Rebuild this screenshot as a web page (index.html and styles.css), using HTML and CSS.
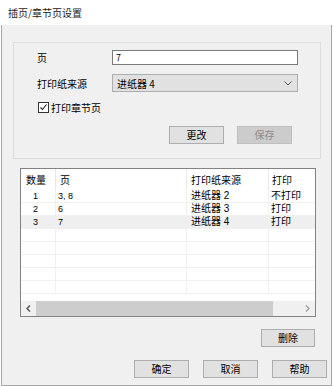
FILE: index.html
```html
<!DOCTYPE html>
<html lang="zh">
<head>
  <meta charset="UTF-8">
  <title>插页/章节页设置</title>
  <link rel="stylesheet" href="styles.css">
</head>
<body>
  <div class="titlebar">插页/章节页设置</div>
  <div class="dialog">
    <div class="group">
      <div class="field">
        <label class="field-label">页</label>
        <div class="textbox">7</div>
      </div>
      <div class="field field-source">
        <label class="field-label">打印纸来源</label>
        <div class="select">
          <span>进纸器 4</span>
          <svg class="chevron" width="8" height="5" viewBox="0 0 8 5"><path d="M0.5 0.5 L4 4 L7.5 0.5" fill="none" stroke="#555" stroke-width="1"/></svg>
        </div>
      </div>
      <div class="check">
        <span class="box">
          <svg width="9" height="9" viewBox="0 0 9 9"><path d="M1.5 4.5 L3.5 6.5 L7.5 1.5" fill="none" stroke="#222" stroke-width="1.1"/></svg>
        </span>
        打印章节页
      </div>
      <div class="group-actions">
        <button class="btn">更改</button>
        <button class="btn" disabled>保存</button>
      </div>
    </div>

    <div class="list">
      <div class="list-body">
        <div class="row header">
          <div class="cell c1">数量</div>
          <div class="cell c2">页</div>
          <div class="cell c3">打印纸来源</div>
          <div class="cell c4">打印</div>
        </div>
        <div class="row">
          <div class="cell c1">1</div>
          <div class="cell c2">3, 8</div>
          <div class="cell c3">进纸器 2</div>
          <div class="cell c4">不打印</div>
        </div>
        <div class="row">
          <div class="cell c1">2</div>
          <div class="cell c2">6</div>
          <div class="cell c3">进纸器 3</div>
          <div class="cell c4">打印</div>
        </div>
        <div class="row selected">
          <div class="cell c1">3</div>
          <div class="cell c2">7</div>
          <div class="cell c3">进纸器 4</div>
          <div class="cell c4">打印</div>
        </div>
        <div class="row"><div class="cell c1"></div><div class="cell c2"></div><div class="cell c3"></div><div class="cell c4"></div></div>
        <div class="row"><div class="cell c1"></div><div class="cell c2"></div><div class="cell c3"></div><div class="cell c4"></div></div>
        <div class="row"><div class="cell c1"></div><div class="cell c2"></div><div class="cell c3"></div><div class="cell c4"></div></div>
        <div class="row"><div class="cell c1"></div><div class="cell c2"></div><div class="cell c3"></div><div class="cell c4"></div></div>
        <div class="row"><div class="cell c1"></div><div class="cell c2"></div><div class="cell c3"></div><div class="cell c4"></div></div>
      </div>
      <div class="hscroll">
        <div class="arrow">
          <svg width="5" height="7" viewBox="0 0 5 7"><path d="M4 0.5 L1 3.5 L4 6.5" fill="none" stroke="#505050" stroke-width="1.4"/></svg>
        </div>
        <div class="thumb"></div>
        <div class="track"></div>
        <div class="arrow">
          <svg width="5" height="7" viewBox="0 0 5 7"><path d="M1 0.5 L4 3.5 L1 6.5" fill="none" stroke="#9a9a9a" stroke-width="1.2"/></svg>
        </div>
      </div>
    </div>

    <div class="delete-row">
      <button class="btn">删除</button>
    </div>

    <div class="footer">
      <button class="btn">确定</button>
      <button class="btn">取消</button>
      <button class="btn">帮助</button>
    </div>
  </div>
</body>
</html>
```

FILE: styles.css
```css
* {
  box-sizing: border-box;
}

body {
  margin: 0;
  width: 334px;
  height: 386px;
  background: #ffffff;
  font-family: "Noto Sans CJK SC", "Noto Sans", sans-serif;
  font-size: 10px;
  color: #000;
  overflow: hidden;
}

.titlebar {
  height: 25px;
  padding-left: 8px;
  line-height: 25px;
  background: #fff;
  color: #1a1a1a;
}

.dialog {
  width: 331px;
  height: 361px;
  margin-left: 1px;
  background: #f0f0f0;
  border: 1px solid #a7a7a7;
  border-top: none;
  overflow: hidden;
}

/* upper group box */
.group {
  width: 308px;
  height: 117px;
  margin: 17px 0 0 11px;
  padding: 7px 0 0 23px;
  border: 1px solid #dcdcdc;
}

.field {
  display: flex;
  align-items: center;
}

.field-source {
  margin-top: 9px;
}

.field-label {
  width: 75px;
  flex-shrink: 0;
}

.textbox {
  width: 186px;
  height: 15px;
  padding-left: 3px;
  line-height: 13px;
  background: #fff;
  border: 1px solid #7a7a7a;
  font-size: 9px;
}

.select {
  width: 186px;
  height: 18px;
  display: flex;
  align-items: center;
  justify-content: space-between;
  padding: 0 5px 0 4px;
  background: #e1e1e1;
  border: 1px solid #adadad;
}

.check {
  display: flex;
  align-items: center;
  gap: 2px;
  margin: 9px 0 0 1px;
  height: 12px;
}

.box {
  width: 11px;
  height: 11px;
  display: flex;
  align-items: center;
  justify-content: center;
  background: #fff;
  border: 1px solid #333;
}

.group-actions {
  display: flex;
  justify-content: flex-end;
  gap: 13px;
  margin: 13px 28px 0 0;
}

.btn {
  width: 55px;
  height: 18px;
  padding: 0;
  margin: 0;
  font-family: inherit;
  font-size: 10px;
  line-height: 16px;
  color: #000;
  background: #e1e1e1;
  border: 1px solid #adadad;
}

.btn:disabled {
  background: #cccccc;
  border-color: #bfbfbf;
  color: #8a8a8a;
}

/* list view */
.list {
  width: 296px;
  height: 149px;
  margin: 9px 0 0 18px;
  background: #fff;
  border: 1px solid #828282;
}

.list-body {
  height: 132px;
  overflow: hidden;
}

.row {
  display: grid;
  grid-template-columns: 35px 131px 82px 46px;
  height: 13px;
  border-bottom: 1px solid #f0f0f0;
  font-family: "Liberation Sans", "Noto Sans CJK SC", sans-serif;
  font-size: 10px;
  line-height: 12px;
}

.row.header {
  height: 21px;
  line-height: 21px;
  border-bottom: none;
  font-family: "Noto Sans CJK SC", "Noto Sans", sans-serif;
}

.row.selected {
  background: #efefef;
}

.cell {
  white-space: nowrap;
  border-right: 1px solid #f0f0f0;
}

.header .cell {
  border-right-color: #e8e8e8;
}

.c1 {
  padding-left: 12px;
  font-size: 9px;
}

.c2 {
  padding-left: 2px;
  font-size: 9px;
}

.c3 {
  padding-left: 4px;
}

.c4 {
  padding-left: 2px;
  border-right: none;
}

.header .c1 {
  padding-left: 5px;
  font-size: 10px;
}

.header .c2 {
  padding-left: 4px;
  font-size: 10px;
}

.header .c4 {
  padding-left: 3px;
}

.hscroll {
  display: flex;
  height: 15px;
  background: #f0f0f0;
}

.arrow {
  width: 15px;
  display: flex;
  align-items: center;
  justify-content: center;
}

.thumb {
  width: 237px;
  background: #cdcdcd;
}

.track {
  flex: 1;
}

.delete-row {
  display: flex;
  justify-content: flex-end;
  margin: 12px 16px 0 0;
}

.delete-row .btn {
  width: 54px;
}

.footer {
  display: flex;
  justify-content: flex-end;
  gap: 14px;
  margin: 13px 4px 0 0;
}
```
